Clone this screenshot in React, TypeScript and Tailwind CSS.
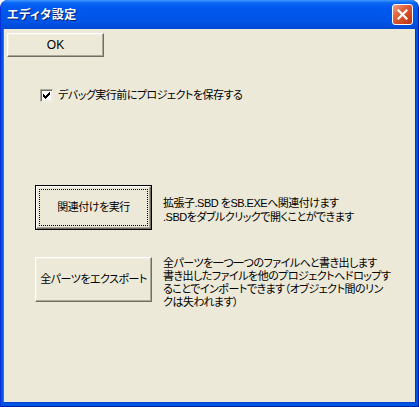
import React from 'react';

const jp = "font-['Liberation_Sans','Noto_Sans_CJK_JP',sans-serif] [font-feature-settings:'palt']";

export default function App() {
    return (
        <div className={`w-[419px] h-[407px] flex flex-col rounded-t-[8px] overflow-hidden bg-[#0054e3] border-l border-l-[#0831d9] border-r border-r-[#001ea0] border-b border-b-[#001ea0] ${jp}`}>
            <div className="h-[29px] shrink-0 flex items-center justify-between pl-[6px] pr-[5px] bg-[linear-gradient(to_bottom,#3d95ff_0px,#0a66f5_3px,#0058ee_8px,#0054e6_22px,#0047d4_29px)]">
                <span className="text-[12px] font-bold text-white tracking-[0.5px] [text-shadow:1px_1px_0_#0a1f6e]">エディタ設定</span>
                <CloseButton />
            </div>

            <div className="flex-1 flex flex-col mx-[2px] mb-[3px] bg-[#ece9d8] border-l border-l-[#2d74f7] border-r border-r-[#0033c8] border-b border-b-[#0a3fd4] pl-[3px] pt-[4px] text-[11px] tracking-[-0.5px] text-black">
                <Button className="w-[97px] h-[24px] text-[12px] tracking-normal">OK</Button>

                <label className="mt-[32px] ml-[33px] flex items-center gap-[5px] h-[13px]">
                    <Checkbox />
                    <span className="leading-[13px] whitespace-nowrap">デバッグ実行前にプロジェクトを保存する</span>
                </label>

                <div className="mt-[83px] ml-[28px] flex items-start gap-[11px]">
                    <Button focused className="w-[117px] h-[45px]">関連付けを実行</Button>
                    <p className="mt-[11px] leading-[14px] whitespace-nowrap">
                        拡張子.SBD をSB.EXEへ関連付けます<br />
                        .SBDをダブルクリックで開くことができます
                    </p>
                </div>

                <div className="mt-[27px] ml-[28px] flex items-start gap-[11px]">
                    <Button className="w-[117px] h-[45px]">全パーツをエクスポート</Button>
                    <p className="mt-[0px] leading-[13px] whitespace-nowrap">
                        全パーツを一つ一つのファイルへと書き出します<br />
                        書き出したファイルを他のプロジェクトへドロップす<br />
                        ることでインポートできます（オブジェクト間のリン<br />
                        クは失われます）
                    </p>
                </div>
            </div>
        </div>
    );
}

function Button({ children, className, focused }: { children: React.ReactNode, className?: string, focused?: boolean }) {
    if (focused) {
        return (
            <div className={`shrink-0 border border-black ${className}`}>
                <div className="w-full h-full p-[2px] bg-[#ece9d8] border-t border-l border-t-white border-l-white border-r border-b border-r-[#716f64] border-b-[#716f64] shadow-[inset_-1px_-1px_#aca899]">
                    <div className="w-full h-full flex items-center justify-center border border-dotted border-black whitespace-nowrap">
                        {children}
                    </div>
                </div>
            </div>
        );
    }
    return (
        <div className={`shrink-0 flex items-center justify-center whitespace-nowrap bg-[#ece9d8] border-t border-l border-t-white border-l-white border-r border-b border-r-[#716f64] border-b-[#716f64] shadow-[inset_-1px_-1px_#aca899,inset_1px_1px_#f1efe2] ${className}`}>
            {children}
        </div>
    );
}

function Checkbox() {
    return (
        <span className="w-[13px] h-[13px] shrink-0 flex items-center justify-center bg-white border-t border-l border-t-[#aca899] border-l-[#aca899] border-r border-b border-r-[#f1efe2] border-b-[#f1efe2] shadow-[inset_1px_1px_#716f64,inset_-1px_-1px_#ece9d8]">
            <svg width="7" height="7" viewBox="0 0 7 7">
                <path d="M0 2h1v1h1v1h1v-1h1v-1h1v-1h1v-1h1v3h-1v1h-1v1h-1v1h-1v1h-1v-1h-1v-1h-1z" fill="#000" />
            </svg>
        </span>
    );
}

function CloseButton() {
    return (
        <div className="w-[21px] h-[21px] rounded-[3px] border border-white flex items-center justify-center bg-[linear-gradient(135deg,#f0a08a_0%,#e2643e_35%,#cf4520_70%,#b8361a_100%)]">
            <svg width="11" height="11" viewBox="0 0 11 11">
                <path d="M1.5 1.5l8 8M9.5 1.5l-8 8" stroke="#fff" strokeWidth="2.2" strokeLinecap="square" />
            </svg>
        </div>
    );
}
